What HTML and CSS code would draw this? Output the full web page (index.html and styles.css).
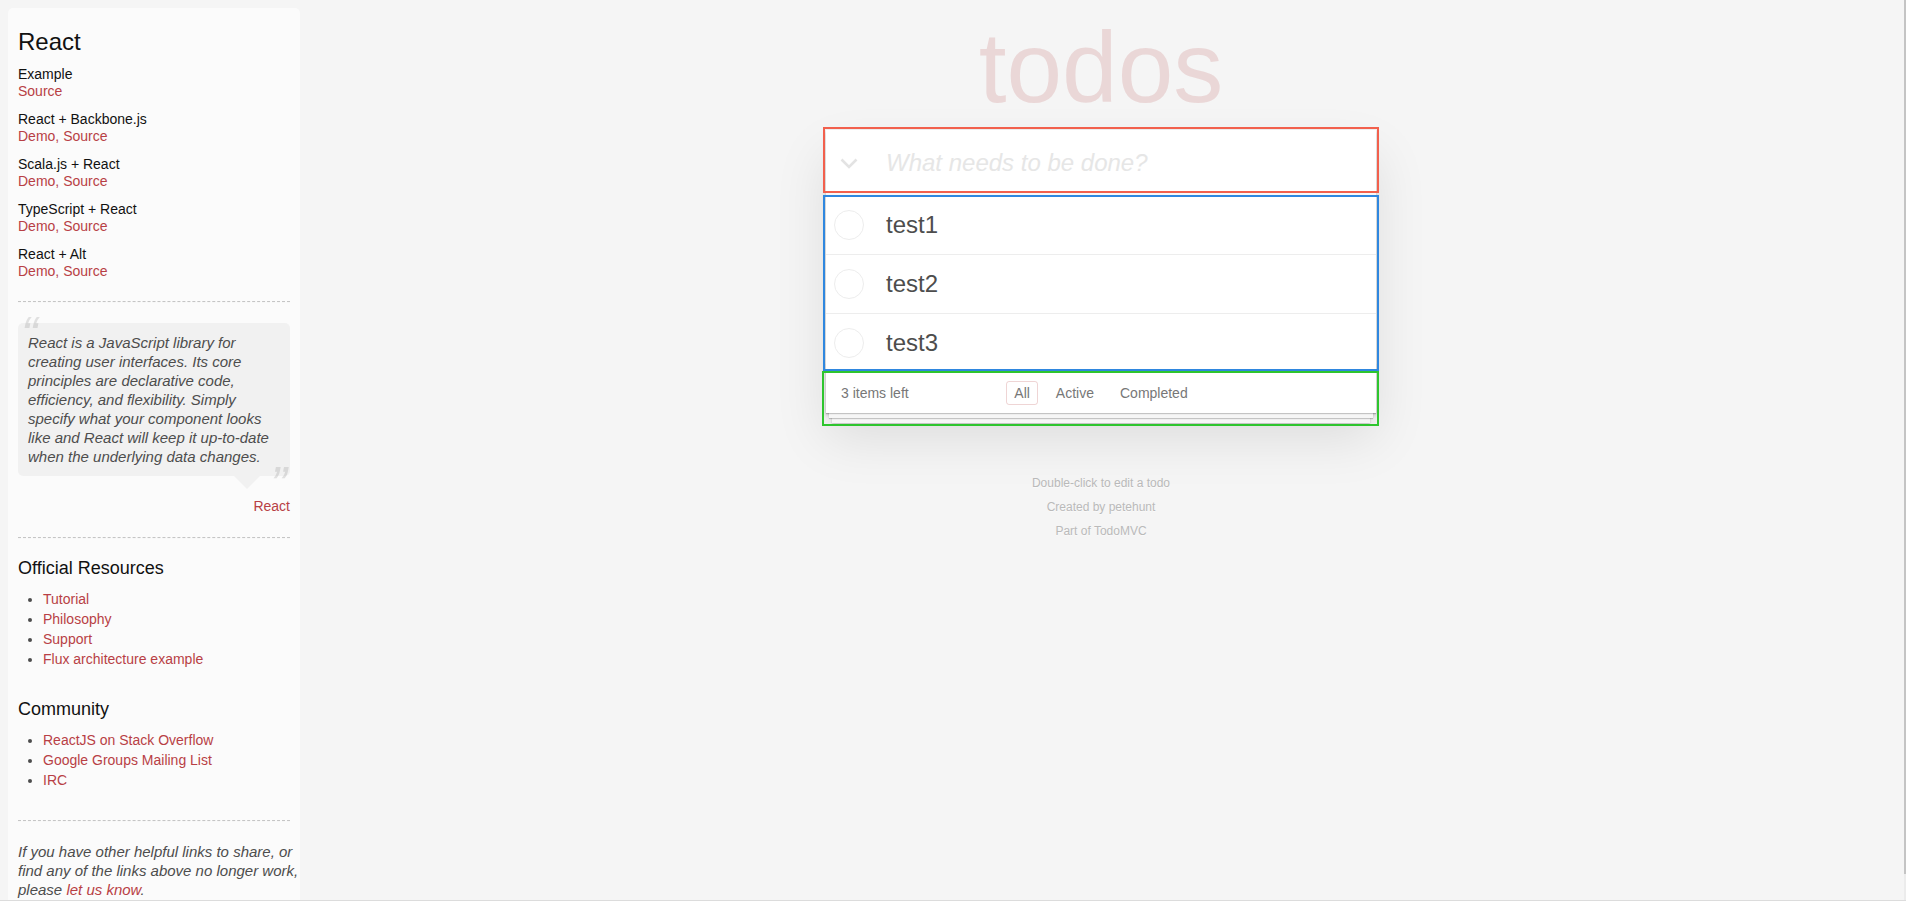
FILE: index.html
```html
<!DOCTYPE html>
<html lang="en">
<head>
<meta charset="utf-8">
<title>React • TodoMVC</title>
<link rel="stylesheet" href="styles.css">
</head>
<body>
<div class="page">
  <aside class="learn">
    <header>
      <h3>React</h3>
      <div class="examples">
        <div class="example"><h5>Example</h5><div class="links"><a href="#">Source</a></div></div>
        <div class="example"><h5>React + Backbone.js</h5><div class="links"><a href="#">Demo</a>, <a href="#">Source</a></div></div>
        <div class="example"><h5>Scala.js + React</h5><div class="links"><a href="#">Demo</a>, <a href="#">Source</a></div></div>
        <div class="example"><h5>TypeScript + React</h5><div class="links"><a href="#">Demo</a>, <a href="#">Source</a></div></div>
        <div class="example"><h5>React + Alt</h5><div class="links"><a href="#">Demo</a>, <a href="#">Source</a></div></div>
      </div>
    </header>
    <hr class="hr-first">
    <blockquote class="quote">
      <p>React is a JavaScript library for creating user interfaces. Its core principles are declarative code, efficiency, and flexibility. Simply specify what your component looks like and React will keep it up-to-date when the underlying data changes.</p>
      <footer><a href="#">React</a></footer>
    </blockquote>
    <hr class="hr-second">
    <h4>Official Resources</h4>
    <ul>
      <li><a href="#">Tutorial</a></li>
      <li><a href="#">Philosophy</a></li>
      <li><a href="#">Support</a></li>
      <li><a href="#">Flux architecture example</a></li>
    </ul>
    <h4>Community</h4>
    <ul>
      <li><a href="#">ReactJS on Stack Overflow</a></li>
      <li><a href="#">Google Groups Mailing List</a></li>
      <li><a href="#">IRC</a></li>
    </ul>
    <footer class="learn-footer">
      <hr class="hr-last">
      <p class="note">If you have other helpful links to share, or<br>find any of the links above no longer work,<br>please <a href="#">let us know</a>.</p>
    </footer>
  </aside>

  <main class="main-col">
    <div class="center">
      <h1 class="title">todos</h1>
      <section class="todoapp">
        <div class="new-row">
          <div class="toggle-all">
            <svg width="18" height="11" viewBox="0 0 18 11"><polyline points="1.5,1.5 9,9 16.5,1.5" fill="none" stroke="#e3e3e3" stroke-width="2.6" stroke-linecap="butt" stroke-linejoin="miter"/></svg>
          </div>
          <input class="new-todo" type="text" placeholder="What needs to be done?">
        </div>
        <ul class="todo-list">
          <li class="todo"><span class="toggle"></span><label>test1</label></li>
          <li class="todo"><span class="toggle"></span><label>test2</label></li>
          <li class="todo"><span class="toggle"></span><label>test3</label></li>
        </ul>
        <footer class="footer">
          <span class="count">3 items left</span>
          <ul class="filters">
            <li><a href="#" class="selected">All</a></li>
            <li><a href="#">Active</a></li>
            <li><a href="#">Completed</a></li>
          </ul>
          <span></span>
        </footer>
        <div class="mark mark-red"></div>
        <div class="mark mark-blue"></div>
        <div class="mark mark-green"></div>
      </section>
      <footer class="info">
        <p>Double-click to edit a todo</p>
        <p>Created by petehunt</p>
        <p>Part of TodoMVC</p>
      </footer>
    </div>
  </main>
</div>
<div class="scrollbar"><div class="scrollbar-thumb"></div></div>
<div class="bottom-line"></div>
</body>
</html>
```
FILE: styles.css
```css
html, body {
  margin: 0;
  padding: 0;
  height: 100%;
  overflow: hidden;
}

body {
  background: #f5f5f5;
  font-family: "Liberation Sans", Arial, sans-serif;
  font-size: 14px;
  color: #111;
}

a {
  color: #b83f45;
  text-decoration: none;
}

.page {
  display: flex;
  align-items: flex-start;
  width: 1902px;
}

/* ---------- sidebar ---------- */
.learn {
  flex: 0 0 272px;
  width: 272px;
  margin: 8px 0 0 8px;
  padding: 10px;
  background: rgba(255, 255, 255, 0.6);
  border-radius: 5px;
}

.learn h3 {
  margin: 10px 0 0;
  font-size: 24px;
  line-height: 28px;
  font-weight: normal;
}

.examples {
  margin-top: 10px;
  display: flex;
  flex-direction: column;
  gap: 11px;
}

.example h5 {
  margin: 0;
  font-size: 14px;
  line-height: 17px;
  font-weight: normal;
}

.links {
  font-size: 14px;
  line-height: 17px;
  color: #b83f45;
}

.learn hr {
  margin: 20px 0;
  border: 0;
  border-top: 1px dashed #c5c5c5;
  border-bottom: 1px dashed #f7f7f7;
  height: 0;
}

.learn .hr-first {
  margin-top: 21px;
}

.learn .hr-second {
  margin-bottom: 19px;
}

.learn .hr-last {
  margin-top: 0;
}

.quote {
  position: relative;
  margin: 20px 0 61px;
  padding: 10px;
  background: rgba(0, 0, 0, 0.04);
  border-radius: 5px;
}

.quote::after {
  content: '';
  position: absolute;
  top: 100%;
  right: 30px;
  border: 13px solid transparent;
  border-top-color: rgba(0, 0, 0, 0.04);
}

.quote p {
  margin: 0;
  font-size: 15px;
  line-height: 19px;
  font-style: italic;
  color: #4d4d4d;
}

.quote p::before {
  content: '\201C';
  font-size: 50px;
  line-height: 65px;
  opacity: 0.15;
  position: absolute;
  top: -20px;
  left: 3px;
}

.quote p::after {
  content: '\201D';
  font-size: 50px;
  line-height: 65px;
  opacity: 0.15;
  position: absolute;
  bottom: -42px;
  right: 3px;
}

.quote footer {
  position: absolute;
  bottom: -40px;
  right: 0;
  line-height: 20px;
}

.learn h4 {
  margin: 0;
  font-size: 18px;
  line-height: 20px;
  font-weight: normal;
}

.learn ul {
  margin: 11px 0 30px 25px;
  padding: 0;
  color: #4d4d4d;
}

.learn li {
  line-height: 20px;
}

.note {
  margin: 0;
  font-size: 15px;
  line-height: 19px;
  font-style: italic;
  color: #4d4d4d;
  white-space: nowrap;
}

/* ---------- main column ---------- */
.main-col {
  flex: 1;
  padding-top: 17px;
}

.center {
  width: 550px;
  margin: 0 auto;
}

.title {
  margin: 0 0 13px;
  height: 100px;
  font-size: 100px;
  line-height: 100px;
  font-weight: 100;
  text-align: center;
  color: rgba(175, 47, 47, 0.15);
}

.todoapp {
  position: relative;
  background: #fff;
  box-shadow: 0 2px 4px 0 rgba(0, 0, 0, 0.2), 0 25px 50px 0 rgba(0, 0, 0, 0.1);
}

.new-row {
  display: flex;
  align-items: center;
  height: 65px;
  box-shadow: inset 0 -2px 1px rgba(0, 0, 0, 0.03);
}

.toggle-all {
  flex: 0 0 60px;
  display: flex;
  align-items: center;
  padding-left: 14px;
  padding-top: 2px;
  box-sizing: border-box;
}

.toggle-all svg {
  display: block;
}

.new-todo {
  flex: 1;
  border: none;
  outline: none;
  background: transparent;
  padding: 0;
  margin: 0;
  font-family: "Liberation Sans", Arial, sans-serif;
  font-size: 24px;
  line-height: 34px;
  color: #4d4d4d;
}

.new-todo::placeholder {
  font-style: italic;
  color: #e6e6e6;
}

.todo-list {
  margin: 0;
  padding: 0;
  list-style: none;
  border-top: 1px solid #e6e6e6;
}

.todo {
  display: flex;
  align-items: center;
  height: 58px;
  border-bottom: 1px solid #ededed;
}

.todo:last-child {
  border-bottom: none;
}

.toggle {
  flex: 0 0 30px;
  width: 30px;
  height: 30px;
  margin-left: 8px;
  box-sizing: border-box;
  border: 1px solid #ededed;
  border-radius: 50%;
}

.todo label {
  margin-left: 22px;
  font-size: 24px;
  line-height: 28px;
  color: #4d4d4d;
}

.footer {
  position: relative;
  display: grid;
  grid-template-columns: 1fr auto 1fr;
  grid-template-rows: 20px;
  align-items: center;
  height: 20px;
  padding: 10px 15px;
  border-top: 1px solid #e6e6e6;
  color: #777;
  font-size: 14px;
}

.footer::before {
  content: '';
  position: absolute;
  right: 0;
  bottom: 0;
  left: 0;
  height: 50px;
  overflow: hidden;
  pointer-events: none;
  box-shadow: 0 1px 1px rgba(0, 0, 0, 0.2),
              0 8px 0 -3px #f6f6f6,
              0 9px 1px -3px rgba(0, 0, 0, 0.2),
              0 16px 0 -6px #f6f6f6,
              0 17px 2px -6px rgba(0, 0, 0, 0.2);
}

.count {
  line-height: 20px;
}

.filters {
  display: flex;
  align-items: center;
  gap: 4px;
  height: 20px;
  margin: 0;
  padding: 0;
  list-style: none;
}

.filters a {
  display: block;
  margin: 0 3px;
  padding: 3px 7px;
  line-height: 16px;
  color: #777;
  border: 1px solid transparent;
  border-radius: 3px;
}

.filters a.selected {
  border-color: rgba(175, 47, 47, 0.2);
}

.mark {
  position: absolute;
  box-sizing: border-box;
  border: 2px solid;
  pointer-events: none;
  z-index: 5;
}

.mark-red {
  left: -3px;
  top: -3px;
  width: 556px;
  height: 66px;
  border-color: #f2604d;
}

.mark-blue {
  left: -3px;
  top: 65px;
  width: 556px;
  height: 176px;
  border-color: #2f87df;
}

.mark-green {
  left: -4px;
  top: 241px;
  width: 557px;
  height: 55px;
  border-color: #2ec52e;
}

.info {
  margin-top: 64px;
  text-align: center;
  color: #bababa;
  font-size: 12px;
  text-shadow: 0 1px 0 rgba(255, 255, 255, 0.5);
}

.info p {
  margin: 0 0 11px;
  line-height: 13px;
}

/* ---------- window chrome ---------- */
.scrollbar {
  position: fixed;
  top: 0;
  right: 0;
  width: 2px;
  height: 100%;
  background: #ececec;
}

.scrollbar-thumb {
  height: 874px;
  background: #c4c4c4;
}

.bottom-line {
  position: fixed;
  left: 0;
  right: 0;
  bottom: 0;
  height: 1px;
  background: #dcdcdc;
}
```
